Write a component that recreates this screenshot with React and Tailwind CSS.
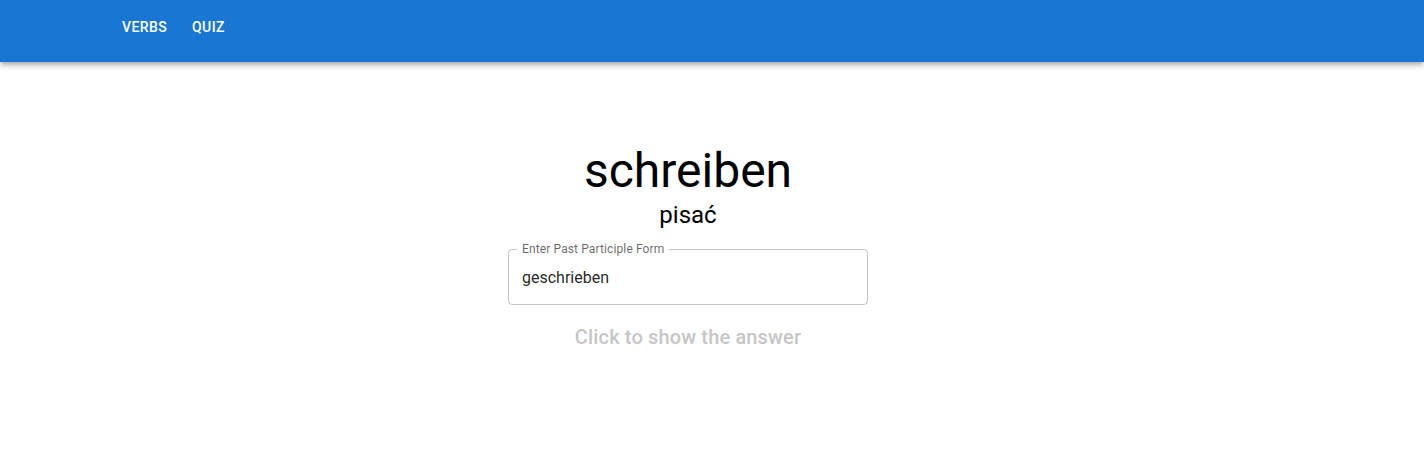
export default function App() {
  return (
    <div className="min-h-[463px] bg-white" style={{ fontFamily: "Roboto, 'Noto Sans', sans-serif" }}>
      <header className="h-[62px] bg-[#1976d2] shadow-[0_2px_4px_-1px_rgba(0,0,0,0.2),0_4px_5px_0_rgba(0,0,0,0.14),0_1px_10px_0_rgba(0,0,0,0.12)] flex items-start pt-[9px] pl-[114px] relative z-10">
        <nav className="flex items-center gap-[9px]">
          <button className="px-2 py-[6px] text-white text-[14px] font-medium uppercase tracking-[0.02857em] leading-[1.75]">Verbs</button>
          <button className="px-2 py-[6px] text-white text-[14px] font-medium uppercase tracking-[0.02857em] leading-[1.75]">Quiz</button>
        </nav>
      </header>
      <main className="w-[1376px] flex flex-col items-center pt-[81px]">
        <h1 className="text-[48px] leading-[56px] font-normal text-black">schreiben</h1>
        <h2 className="text-[24px] leading-[32px] font-normal text-black">pisać</h2>
        <div className="relative mt-[18px] w-[360px] h-[56px] border border-[rgba(0,0,0,0.23)] rounded-[4px]">
          <span className="absolute -top-[7px] left-[8px] px-[5px] bg-white text-[12px] leading-[12px] text-[rgba(0,0,0,0.6)] tracking-[0.01em]">Enter Past Participle Form</span>
          <input
            className="w-full h-full px-[13px] text-[16px] text-[rgba(0,0,0,0.87)] bg-transparent outline-none"
            defaultValue="geschrieben"
          />
        </div>
        <p className="mt-[16px] text-[20px] leading-[32px] font-medium tracking-[0.0075em] text-[#c6c6c6]">Click to show the answer</p>
      </main>
    </div>
  );
}
